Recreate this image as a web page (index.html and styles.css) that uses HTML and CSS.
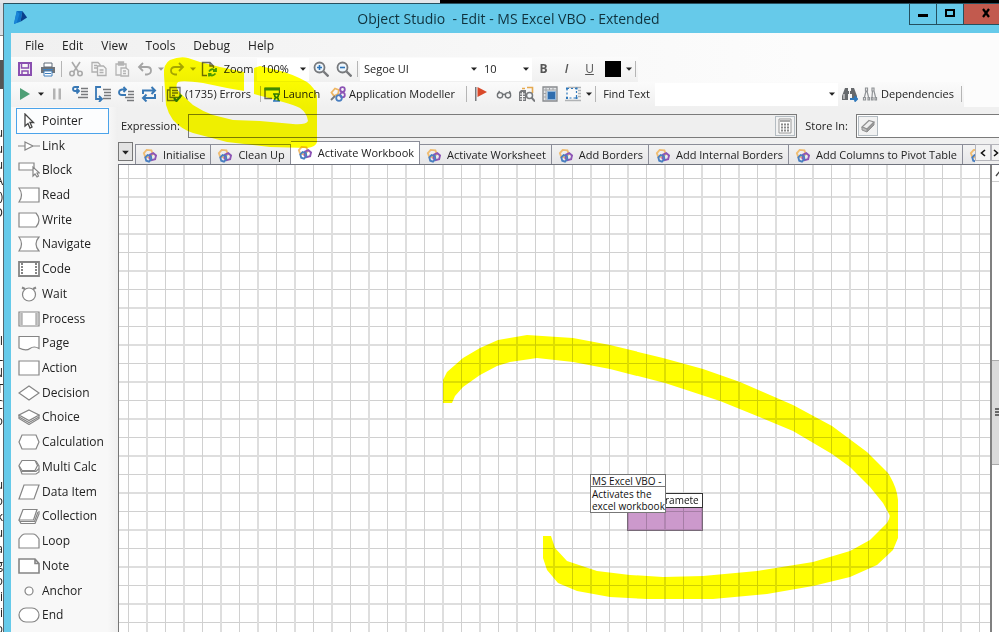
FILE: index.html
```html
<!DOCTYPE html>
<html lang="en">
<head>
<meta charset="utf-8">
<title>Object Studio - Edit - MS Excel VBO - Extended</title>
<link rel="stylesheet" href="styles.css">
</head>
<body>
<svg class="defs" aria-hidden="true">
  <defs>
    <symbol id="page" viewBox="0 0 16 16">
      <g fill="none" stroke-width="2">
        <path stroke="#f0bd72" d="M2 5.500 5 2l5 .5 1.500 4L8 10 3.500 9.500z"/>
        <path stroke="#8d55b5" d="M8.500 7 12 5.500l3 2.500-1 4-4 1-2-2z"/>
        <path stroke="#4a7fc0" d="M3.500 10 6 7.500l3.500 1 .5 3.500-2.500 2.500-3-1z"/>
      </g>
    </symbol>
    <symbol id="down" viewBox="0 0 8 6"><path fill="currentColor" d="M1 1.500h6L4 4.800z"/></symbol>
  </defs>
</svg>

<div class="backdrop-top"></div>
<div class="desktop">
  <div class="backdrop-left" aria-hidden="true">
    <div class="behind-head"></div><div class="behind-gap"></div><div class="behind-dark"></div>
<pre class="behind-text">u
u
u
A
(
D







I
L
N
T
C
o



u
o
k
u
a
g
o
i
i
o</pre>
  </div>
  <div class="window">
    <header class="titlebar">
      <svg class="logo" viewBox="0 0 16 16"><path fill="#0d6fc4" d="M4 1h6L8 12.500 1 15z"/><path fill="#0a3f8c" d="M10 1 15 8l-7 4.500z"/><path fill="#1a85d8" d="M4 1 1 15l3-1.500L7 4z"/></svg>
      <h1>Object Studio&nbsp; - Edit - MS Excel VBO - Extended</h1>
      <div class="win-buttons">
        <button class="win" aria-label="Minimise"><svg viewBox="0 0 12 10"><path d="M1 6h10v3H1z"/></svg></button>
        <button class="win" aria-label="Maximise"><svg viewBox="0 0 12 10"><path fill="none" stroke="#000" stroke-width="2" d="M2 2h8v6H2z"/></svg></button>
        <button class="win close" aria-label="Close"><svg viewBox="0 0 12 10"><path fill="none" stroke="#000" stroke-width="2.200" d="M3 1l6 8M9 1 3 9"/></svg></button>
      </div>
    </header>

    <div class="client">
      <nav class="menu">
        <button>File</button><button>Edit</button><button>View</button><button>Tools</button><button>Debug</button><button>Help</button>
      </nav>

      <div class="toolbar">
        <button class="ib" aria-label="Save"><svg viewBox="0 0 16 16"><path fill="none" stroke="#8a4fb0" stroke-width="2" d="M2 2h12v12H2z"/><path fill="none" stroke="#8a4fb0" stroke-width="1.500" d="M4.500 2v5h7V2M5 14v-4h6v4"/></svg></button>
        <button class="ib" aria-label="Print"><svg viewBox="0 0 16 16"><path fill="#707479" d="M1 6h14v6H1z"/><path fill="#fff" stroke="#5f6b78" d="M4 2h8v4H4z"/><path fill="#fff" stroke="#3f7fbd" d="M4 10h8v5H4z"/><path stroke="#3f7fbd" d="M5 12.500h6M3 8.500h10"/></svg></button>
        <i class="sep"></i>
        <button class="ib off" aria-label="Cut"><svg viewBox="0 0 16 16"><g fill="none" stroke="#a9a9a9" stroke-width="1.600"><path d="M4 1l6.500 10M12 1 5.500 11"/><circle cx="4" cy="12.500" r="2.200"/><circle cx="12" cy="12.500" r="2.200"/></g></svg></button>
        <button class="ib off" aria-label="Copy"><svg viewBox="0 0 16 16"><g fill="#f5f5f5" stroke="#b0b0b0" stroke-width="1.300"><path d="M1 1.500h6l2 2V11H1z"/><path d="M6.500 5h6L15 7.500v7H6.500z"/><path d="M3 4.500h3M3 7h3M8.500 9h4M8.500 11.500h4"/></g></svg></button>
        <button class="ib off" aria-label="Paste"><svg viewBox="0 0 16 16"><g fill="#f5f5f5" stroke="#b4b4b4" stroke-width="1.300"><path d="M2 3h10v11H2z"/><path fill="#b4b4b4" d="M4.500 1h5v3h-5z"/><path d="M7 7h5l2.500 2v6H7zM9 10h3M9 12.500h3"/></g></svg></button>
        <button class="ib off" aria-label="Undo"><svg viewBox="0 0 16 16"><path fill="none" stroke="#a5a5a5" stroke-width="1.800" d="M6 2 2 6l4 4M2 6h8q4 0 4 3.500T10 13.500H8"/></svg></button>
        <button class="dd off" aria-label="Undo list"><svg viewBox="0 0 8 6"><use href="#down"/></svg></button>
        <button class="ib off" aria-label="Redo"><svg viewBox="0 0 16 16"><path fill="none" stroke="#a5a5a5" stroke-width="1.800" d="M10 2l4 4-4 4M14 6H6Q2 6 2 9.500T6 13.500h2"/></svg></button>
        <button class="dd off" aria-label="Redo list"><svg viewBox="0 0 8 6"><use href="#down"/></svg></button>
        <button class="ib" aria-label="Refresh page"><svg viewBox="0 0 16 16"><path fill="none" stroke="#6b6b6b" stroke-width="1.400" d="M6 14.500H1.500v-13H9L12.500 5v2M9 1.500V5h3.500"/><g fill="none" stroke="#4b9a47" stroke-width="1.800"><path d="M8 10.500q3-4 6-1M15 7v3h-3M14.500 12.500q-3 3.500-6 1M8 15.500V13h2.500"/></g></svg></button>
        <label class="tlabel zoom-label" for="zoom">Zoom</label>
        <span class="combo combo-s"><select id="zoom"><option>100%</option></select><svg viewBox="0 0 8 6"><use href="#down"/></svg></span>
        <button class="ib" aria-label="Zoom in"><svg viewBox="0 0 16 16"><circle cx="6.500" cy="6.500" r="5" fill="#eef6fc" stroke="#77797c" stroke-width="1.800"/><path stroke="#77797c" stroke-width="2.400" d="M10.500 10.500l5 5"/><path stroke="#2d74b8" stroke-width="1.600" d="M4 6.500h5M6.500 4v5"/></svg></button>
        <button class="ib" aria-label="Zoom out"><svg viewBox="0 0 16 16"><circle cx="6.500" cy="6.500" r="5" fill="#eef6fc" stroke="#77797c" stroke-width="1.800"/><path stroke="#77797c" stroke-width="2.400" d="M10.500 10.500l5 5"/><path stroke="#2d74b8" stroke-width="1.600" d="M4 6.500h5"/></svg></button>
        <i class="sep"></i>
        <span class="combo combo-l"><select aria-label="Font"><option>Segoe UI</option></select><svg viewBox="0 0 8 6"><use href="#down"/></svg></span>
        <span class="combo combo-s"><select aria-label="Font size"><option>10</option></select><svg viewBox="0 0 8 6"><use href="#down"/></svg></span>
        <button class="ib fmt bold">B</button>
        <button class="ib fmt italic">I</button>
        <button class="ib fmt under">U</button>
        <button class="ib" aria-label="Font colour"><span class="swatch"></span></button>
        <button class="dd" aria-label="Colour list"><svg viewBox="0 0 8 6"><use href="#down"/></svg></button>
        <i class="sep"></i>
      </div>

      <div class="toolbar">
        <button class="ib" aria-label="Go"><svg viewBox="0 0 16 16"><path fill="#4f9f76" d="M3 2l10 6-10 6z"/></svg></button>
        <button class="dd" aria-label="Go options"><svg viewBox="0 0 8 6"><use href="#down"/></svg></button>
        <button class="ib" aria-label="Pause"><svg viewBox="0 0 16 16"><path fill="#b3b3b3" d="M4 2.500h2.500v11H4zM9.500 2.500H12v11H9.500z"/></svg></button>
        <button class="ib" aria-label="Step in"><svg viewBox="0 0 16 16"><path fill="none" stroke="#3878b5" stroke-width="1.800" d="M7 1H3Q1 1 1 3t2 2h3M4.500 2.500 7 5 4.500 7.500"/><path stroke="#77797c" stroke-width="1.400" d="M9 2.500h7M9 5.500h7M9 8.500h7M6 11.500h10"/></svg></button>
        <button class="ib" aria-label="Step over"><svg viewBox="0 0 16 16"><path fill="none" stroke="#3878b5" stroke-width="1.800" d="M6 1H1v12h5M4 10l3 3-3 3"/><path stroke="#77797c" stroke-width="1.400" d="M8 3.500h8M9 6.500h7M9 9.500h7M8 12.500h8"/></svg></button>
        <button class="ib" aria-label="Step out"><svg viewBox="0 0 16 16"><path fill="none" stroke="#3878b5" stroke-width="1.800" d="M8 9H4Q1 9 1 6.500T4 3.500h4M5.500 1 8 3.500 5.500 6"/><path stroke="#77797c" stroke-width="1.400" d="M10 5.500h6M10 8.500h6M7 11.500h9M9 14.500h7"/></svg></button>
        <button class="ib" aria-label="Reset"><svg viewBox="0 0 16 16"><path fill="none" stroke="#3878b5" stroke-width="2" d="M2 8V4.500h11M10.500 1l3.500 3.500L10.500 8M14 8v4H3M5.500 8.500 2 12l3.500 3.500"/></svg></button>
        <i class="sep"></i>
        <button class="tb tb-errors"><svg viewBox="0 0 16 16"><path fill="#eef0f2" stroke="#6d7174" stroke-width="1.300" d="M4 1.500h10v10H4z"/><path fill="none" stroke="#6d7174" stroke-width="1.300" d="M4 4H1.500v10.500H10M6 4.500h6M6 7h6M6 9.500h3"/><path fill="none" stroke="#2f78bb" stroke-width="2.200" d="M8 12l2.500 3L15.500 9"/></svg>(1735) Errors</button>
        <i class="sep"></i>
        <button class="tb tb-launch"><svg viewBox="0 0 16 16"><path fill="none" stroke="#666" stroke-width="1.400" d="M8 12.500H1v-10h14.500V7"/><path fill="#3f8b4d" d="M.5 1.500h15.500v3H.5z"/><path fill="none" stroke="#2f78bb" stroke-width="1.600" d="M9 8h7M9 15h7M10.500 8q0 3.500 2 3.500t2-3.500M10.500 15q0-3.500 2-3.500t2 3.500"/></svg>Launch</button>
        <button class="tb tb-model"><svg viewBox="0 0 16 16"><g fill="none" stroke-width="1.800"><path stroke="#efb765" d="M1.500 6.500 5 2.500l4 1.500-1 4-4 2z"/><circle cx="12.500" cy="3.500" r="2.300" stroke="#8d55b5"/><circle cx="12.500" cy="9" r="2.300" stroke="#8d55b5"/><circle cx="9" cy="12" r="2.800" stroke="#4a7fc0"/><path stroke="#77797c" d="M1 14l4-4"/></g></svg>Application Modeller</button>
        <i class="sep"></i>
        <button class="ib" aria-label="Breakpoint"><svg viewBox="0 0 16 16"><path fill="#77797c" d="M2 1h1.500v14H2z"/><path fill="#d9492a" d="M4.500 1 14 6l-9.500 5z"/></svg></button>
        <button class="ib" aria-label="Watch"><svg viewBox="0 0 18 16"><g fill="none" stroke="#707376" stroke-width="1.500"><circle cx="4.500" cy="9.500" r="3"/><circle cx="13.500" cy="9.500" r="3"/><path d="M7.500 9q1.500-1.500 3 0M2 8l2-3.500M16.500 8 15 4.500"/></g></svg></button>
        <button class="ib" aria-label="Find references"><svg viewBox="0 0 16 16"><path fill="#77797c" d="M0 6l2-2h5v11H0z"/><path stroke="#f5f5f5" d="M1 8h5M1 10.500h5M1 13h5M3.500 6v9"/><path fill="none" stroke="#e5a94f" stroke-width="1.600" d="M3 2.500h3M8 1.500h5.500V7"/><circle cx="10.500" cy="9.500" r="3" fill="#f4f8fb" stroke="#77797c" stroke-width="1.500"/><path stroke="#77797c" stroke-width="2" d="M12.500 11.500 16 15.500"/></svg></button>
        <button class="ib" aria-label="Overview"><svg viewBox="0 0 16 16"><path fill="#e4e6e8" stroke="#888b8e" stroke-width="1.300" d="M1 1h14v14H1z"/><path stroke="#a0a3a6" d="M1 4h14M4 1v14M7.500 1v3M11 1v3M1 7.500h3M1 11h3"/><path fill="#2f6dae" stroke="#8fb6dc" d="M5.500 5.500h8v8h-8z"/></svg></button>
        <button class="ib" aria-label="Grid"><svg viewBox="0 0 16 16"><path stroke="#b0b2b4" stroke-width="1.500" d="M3 1.500h13M13 4.500h3M13 7.500h3M13 10.500h3M0 14.500h16"/><path fill="#fafafa" stroke="#2f78bb" stroke-width="1.200" stroke-dasharray="2 2" d="M2 2.500h9.500V12H2z"/><path fill="#2f78bb" d="M1 1.500h2v2H1zM10.500 1.500h2v2h-2zM1 11h2v2H1zM10.500 11h2v2h-2z"/></svg></button>
        <button class="dd" aria-label="Grid options"><svg viewBox="0 0 8 6"><use href="#down"/></svg></button>
        <i class="sep"></i>
        <label class="tlabel find-label" for="find">Find Text</label>
        <span class="combo combo-find"><input id="find" type="text"><svg viewBox="0 0 8 6"><use href="#down"/></svg></span>
        <button class="ib" aria-label="Find next"><svg viewBox="0 0 16 16"><path fill="#66696c" d="M3 2h3v3h3V2h3l3 8v2h-5V8H6v6H0v-4z"/><path stroke="#f4f4f4" d="M2 8v5M7.500 4v4"/><path fill="none" stroke="#2f78bb" stroke-width="2" d="M8 13h7M12.500 10.500 15 13l-2.500 2.500"/></svg></button>
        <button class="tb tb-dep"><svg viewBox="0 0 16 16"><g fill="none" stroke="#909396" stroke-width="1.200"><path d="M3.500 2h2v3h-2zM10 2h2v3h-2zM4 5 2.500 11M5 5l1.500 6M10.500 5l-.5 6M12 5l1.500 6M1.500 11.500h2V14h-2zM6 11.500h1.500V14H6zM9.500 11.500H11V14H9.500zM13 11.500h1.500V14H13z"/></g></svg>Dependencies</button>
        <i class="sep"></i>
      </div>

      <div class="workspace">
        <aside class="palette">
          <button class="selected"><svg viewBox="0 0 22 16"><path fill="#fff" stroke="#444" stroke-width="1.300" d="M7 1v12l3-2.500 2 4.500 2-1-2-4.500h3.500z"/></svg>Pointer</button>
          <button><svg viewBox="0 0 22 16"><path d="M0 8h7M15 8h7M7 4l8 4-8 4z"/></svg>Link</button>
          <button><svg viewBox="0 0 22 16"><path d="M1 1h15v7H1z"/><path d="M15 5v9l2-2 2 3 1.500-1-1.500-3h2.500z"/></svg>Block</button>
          <button><svg viewBox="0 0 22 16"><path d="M1 1h20v14H1Q6 8 1 1z"/></svg>Read</button>
          <button><svg viewBox="0 0 22 16"><path d="M1 1h17q6 7 0 14H1z"/></svg>Write</button>
          <button><svg viewBox="0 0 22 16"><path d="M1 1h20q-6 7 0 14H1Q6 8 1 1z"/></svg>Navigate</button>
          <button><svg viewBox="0 0 22 16"><path stroke-width="1.800" d="M1 1h20v14H1z"/><path d="M4 2v12M18 2v12" stroke-dasharray="2 1" stroke-width="2"/></svg>Code</button>
          <button><svg viewBox="0 0 22 16"><circle cx="11" cy="8.500" r="6.500"/><path stroke-width="2" d="M4 1.500l3 1.500M18 1.500 15 3"/></svg>Wait</button>
          <button><svg viewBox="0 0 22 16"><path d="M1 1h20v14H1z"/><path stroke="#b5b5b5" stroke-width="2.500" d="M3.500 2v12M18.500 2v12"/></svg>Process</button>
          <button><svg viewBox="0 0 22 16"><path d="M1 1.500h20v12q-5-3-9 0t-11-.5z"/></svg>Page</button>
          <button><svg viewBox="0 0 22 16"><path d="M1 1h20v14H1z"/></svg>Action</button>
          <button><svg viewBox="0 0 22 16"><path d="M11 1l10 7-10 7L1 8z"/></svg>Decision</button>
          <button><svg viewBox="0 0 22 16"><path d="M1 6v3.500l10 6 10-6V6"/><path d="M1 8l10 5.500L21 8"/><path d="M11 1l10 5-10 5.500L1 6z"/></svg>Choice</button>
          <button><svg viewBox="0 0 22 16"><path d="M4 1h14l3 7-3 7H4L1 8z"/></svg>Calculation</button>
          <button><svg viewBox="0 0 22 16"><path d="M1 7l3 8h14l3-2V7l-3-5"/><path d="M3 12.500h15l3-3"/><path d="M4 1.500h13l2.500 5-2.500 5H4L1 6.500z"/></svg>Multi Calc</button>
          <button><svg viewBox="0 0 22 16"><path d="M6 1h15l-5 14H1z"/></svg>Data Item</button>
          <button><svg viewBox="0 0 22 16"><path d="M1 12l2 3.500h14L21 6V3"/><path d="M2 13.500h14.500L20 4"/><path d="M5 1.500h14L15.500 12H1z"/></svg>Collection</button>
          <button><svg viewBox="0 0 22 16"><path d="M1 15V6q3-5 6-5h8q3 0 6 5v9z"/></svg>Loop</button>
          <button><svg viewBox="0 0 22 16"><path stroke-width="1.600" d="M1 1h16l4 4.500V15H1zM17 1v4.500h4"/></svg>Note</button>
          <button><svg viewBox="0 0 22 16"><circle cx="11" cy="8" r="4"/></svg>Anchor</button>
          <button><svg viewBox="0 0 22 16"><rect x="1" y="1" width="20" height="14" rx="7"/></svg>End</button>
        </aside>

        <main class="editor">
          <div class="expression">
            <label for="expr">Expression:</label>
            <span class="field expr"><input id="expr" type="text"><button aria-label="Expression editor"><svg viewBox="0 0 16 16"><path fill="#fff" stroke="#999" d="M2 1h12v14H2z"/><path fill="#aaa" d="M3 2h10v2H3z"/><path stroke="#888" stroke-width="2" stroke-dasharray="2 1" d="M4 6.500h9M4 9.500h9M4 12.500h9"/></svg></button></span>
            <label for="store">Store In:</label>
            <span class="field store"><button aria-label="Data item"><svg viewBox="0 0 16 16"><path fill="#eee" stroke="#909090" stroke-width="1.200" d="M9 2.500 14 4 7 11 2 9z"/><path fill="#999" stroke="#909090" d="M14 4v3l-7 7v-3z"/><path fill="#bbb" stroke="#909090" d="M2 9l5 2v3l-5-2z"/></svg></button><input id="store" type="text"></span>
          </div>

          <div class="tabs">
            <button class="tab-list" aria-label="Page list"><svg viewBox="0 0 8 6"><use href="#down"/></svg></button>
            <div class="tab-strip" role="tablist">
              <button role="tab"><svg><use href="#page"/></svg>Initialise</button>
              <button role="tab"><svg><use href="#page"/></svg>Clean Up</button>
              <button role="tab" class="active" aria-selected="true"><svg><use href="#page"/></svg>Activate Workbook</button>
              <button role="tab"><svg><use href="#page"/></svg>Activate Worksheet</button>
              <button role="tab"><svg><use href="#page"/></svg>Add Borders</button>
              <button role="tab"><svg><use href="#page"/></svg>Add Internal Borders</button>
              <button role="tab"><svg><use href="#page"/></svg>Add Columns to Pivot Table</button>
              <button role="tab" aria-label="Next page"><svg><use href="#page"/></svg></button>
            </div>
            <button class="tab-nav" aria-label="Scroll left"><svg viewBox="0 0 8 8"><path d="M6 1 2.500 4 6 7"/></svg></button>
            <button class="tab-nav last" aria-label="Scroll right"><svg viewBox="0 0 8 8"><path d="M2 1l3.500 3L2 7"/></svg></button>
          </div>

          <div class="canvas-row">
            <div class="canvas">
              <div class="node data"><div class="data-head">ramete</div><div class="data-body"></div></div>
              <div class="node info"><div class="info-head">MS Excel VBO -</div><div class="info-body">Activates the<br>excel workbook</div></div>
            </div>
            <div class="scrollbar">
              <button class="up" aria-label="Scroll up"><svg viewBox="0 0 12 8"><path d="M2 7l4-5 4 5"/></svg></button>
              <div class="track-before"></div>
              <div class="thumb"><svg viewBox="0 0 8 8"><path d="M0 1h8M0 4h8M0 7h8"/></svg></div>
              <div class="track-after"></div>
            </div>
          </div>
        </main>
      </div>
    </div>
  </div>
</div>

<svg class="marker" width="999" height="632" aria-hidden="true">
  <path d="M244 72 220 67 200 62 188 58Q180 56 170 60 163 64 164 75L166 105Q168 113 173 120 181 129 193 133L227 142 270 147 307 148Q316 147 317 142V96Q315 88 307 82 293 74 277 70L260 66 254 68V94L283 102Q294 105 300 108 307 113 308 121 306 125 293 124L260 121 233 120 213 115Q202 111 193 105L180 93Q174 86 178 82 183 80 203 83L227 88 244 91z"/>
  <path d="M443 403V380L447 372 463 358 480 348 498 340 527 335 573 338 610 345 663 358 703 369 740 382 793 405 832 426 867 452 888 473Q897 487 898 500V538L893 550 877 565 850 577 813 586 767 594 713 599H647L610 597 577 591 558 583 547 570 543 558V536H551L555 548 567 561 597 571 630 575 663 577 703 576 757 571 813 562 850 551 870 540 887 523Q891 517 889 514L883 503 870 487 850 467 832 454 793 431 757 416 720 401 665 383 610 369 573 362 537 358 510 362 497 366 480 375 463 387 455 396 452 403z"/>
</svg>
</body>
</html>
```

FILE: styles.css
```css
* { box-sizing: border-box; }

html, body { height: 100%; }

body {
  margin: 0;
  position: relative;
  display: flex;
  flex-direction: column;
  overflow: hidden;
  background: #fff;
  color: #222;
  font: 12px/16px "Open Sans", "Noto Sans", sans-serif;
}

button, input, select {
  margin: 0;
  padding: 0;
  border: 0;
  border-radius: 0;
  background: none;
  color: inherit;
  font: inherit;
}

h1, pre { margin: 0; }
svg { flex: none; }
.defs { position: absolute; width: 0; height: 0; }

/* What shows behind the window */
.backdrop-top {
  flex: none;
  height: 3px;
  background: linear-gradient(90deg, #e4e6ea 44%, #000 44%);
}
.desktop { flex: 1; min-height: 0; display: flex; }
.backdrop-left {
  width: 4px;
  overflow: hidden;
  border-right: 1px solid #54666e;
  background: #fff;
}
.behind-head { height: 33px; background: #d9dfe6; border-bottom: 1px solid #888; }
.behind-gap { height: 24px; }
.behind-dark { height: 29px; background: #555; margin-bottom: 36px; }
.behind-text {
  font: 12px/16px "Open Sans", sans-serif;
  direction: rtl;
  width: 3px;
}

/* Window frame */
.window {
  flex: 1;
  min-width: 0;
  display: flex;
  flex-direction: column;
  padding-left: 7px;
  background: #66caea;
  border-top: 1px solid #28505f;
}
.titlebar {
  flex: none;
  height: 29px;
  display: flex;
  align-items: flex-start;
}
.logo { width: 15px; height: 15px; margin: 6px 0 0 2px; }
.titlebar h1 {
  flex: 1;
  padding-left: 80px;
  text-align: center;
  font-size: 14px;
  line-height: 29px;
  font-weight: 400;
  color: #10323d;
}
.win-buttons { display: flex; }
.win {
  width: 27px;
  height: 21px;
  border: 1px solid #24505f;
  border-top: 0;
  border-right: 0;
}
.win svg { width: 12px; height: 10px; }
.win.close { width: 36px; background: #c25a4e; padding-left: 8px; }

.client {
  flex: 1;
  min-height: 0;
  display: flex;
  flex-direction: column;
  background: linear-gradient(90deg, #f0f0f0, #fcfcfc 80%);
}

/* Menu and toolbars */
.menu {
  flex: none;
  height: 24px;
  display: flex;
  align-items: center;
  gap: 18px;
  padding: 1px 0 0 14px;
}
.toolbar {
  flex: none;
  height: 25px;
  display: flex;
  align-items: center;
  align-self: flex-start;
  padding: 0 0 1px 2px;
  background: linear-gradient(#fbfbfb, #f0f0f0);
  font-size: 11px;
}
.toolbar button { display: flex; align-items: center; justify-content: center; }
.ib { width: 23px; height: 22px; }
.ib svg { width: 16px; height: 16px; }
.dd { width: 9px; height: 22px; }
.dd svg { width: 8px; height: 6px; }
.off { color: #999; }
.sep { flex: none; width: 1px; height: 16px; margin: 0 2px; background: #b5b5b5; }
.tlabel { text-align: center; }
.zoom-label { width: 37px; }
.find-label { width: 57px; }
.toolbar .tb { height: 22px; justify-content: flex-start; gap: 3px; padding-left: 1px; white-space: nowrap; }
.tb svg { width: 16px; height: 16px; }
.tb-errors { width: 93px; }
.tb-launch { width: 66px; }
.tb-model { width: 135px; }
.tb-dep { width: 98px; }
.fmt { color: #555; }
.toolbar .fmt { font-size: 12px; }
.bold { font-weight: 700; }
.italic { font-style: italic; font-weight: 600; }
.under { text-decoration: underline; }
.swatch { width: 16px; height: 16px; background: #000; }

.combo {
  display: flex;
  align-items: center;
  height: 23px;
  padding: 0 2px 0 4px;
  background: #fff;
}
.combo select, .combo input { flex: 1; min-width: 0; appearance: none; outline: 0; }
.combo svg { width: 8px; height: 6px; }
.combo-s { width: 52px; }
.combo-l { width: 120px; }
.combo-find { width: 183px; }

/* Shape palette */
.workspace { flex: 1; min-height: 0; display: flex; background: #f0f0f0; }
.palette {
  flex: none;
  width: 107px;
  display: flex;
  flex-direction: column;
  padding: 1px 9px 4px 5px;
  background: linear-gradient(90deg, #f8f8f8 90%, #efefef);
}
.palette button {
  flex: 1;
  min-height: 0;
  display: flex;
  align-items: center;
  gap: 2px;
  padding: 0 0 1px 2px;
  text-align: left;
  line-height: 16px;
  white-space: nowrap;
}
.palette .selected { padding: 0 0 0 1px; border: 1px solid #4ba3ea; background: #fcfdfe; }
.palette svg {
  width: 22px;
  height: 16px;
  fill: #fff;
  stroke: #858585;
  stroke-width: 1.2;
}

/* Editor */
.editor { flex: 1; min-width: 0; display: flex; flex-direction: column; }
.expression {
  flex: none;
  height: 34px;
  display: flex;
  align-items: center;
  gap: 8px;
  padding: 5px 0 1px 3px;
  overflow: hidden;
  font-size: 11px;
}
.expression label { white-space: nowrap; }
.field { height: 24px; display: flex; border: 1px solid #7b7b7b; padding: 1px; }
.field input { flex: 1; min-width: 0; outline: 0; }
.field button { width: 20px; border: 1px solid #b4bcc2; display: flex; align-items: center; justify-content: center; background: #f2f2f2; }
.field svg { width: 16px; height: 16px; }
.expr { flex: 1; background: #efefef; }
.store { width: 143px; border-right: 0; background: #fff; }

.tabs {
  flex: none;
  height: 24px;
  display: flex;
  align-items: flex-end;
  border-bottom: 1px solid #70737d;
  font-size: 11px;
}
.tab-list { width: 15px; height: 19px; margin: 0 2px 3px 0; border: 1px solid #777; background: #e3e3e3; }
.tab-list svg { width: 9px; height: 7px; }
.tab-strip { flex: 1; min-width: 0; height: 23px; overflow: hidden; display: flex; align-items: flex-end; }
.tab-strip button {
  flex: none;
  height: 20px;
  display: flex;
  align-items: center;
  gap: 6px;
  padding: 1px 5px 0 6px;
  border: 1px solid #8b8d98;
  border-width: 1px 1px 0 0;
  background: linear-gradient(#f3f3f3, #e6e6e8);
  white-space: nowrap;
}
.tab-strip button:first-child { border-left-width: 1px; }
.tab-strip svg { width: 15px; height: 15px; }
.tab-strip .active { height: 23px; background: #fff; padding-bottom: 2px; }
.tab-nav { width: 16px; height: 17px; margin-bottom: 3px; border: 1px solid #b5b5bb; background: #f3f3f3; }
.tab-nav.last { width: 8px; border-right: 0; overflow: hidden; }
.tab-nav svg { width: 8px; height: 8px; fill: none; stroke: #111; stroke-width: 1.6; }

.canvas-row { flex: 1; min-height: 0; display: flex; border-left: 1px solid #777; }
.canvas {
  flex: 1;
  position: relative;
  overflow: hidden;
  background-color: #fff;
  background-image:
    linear-gradient(90deg, #d0d0d0 1px, transparent 1px, transparent 18px, #dedede 18px, #dedede 20px, transparent 20px),
    linear-gradient(#d0d0d0 1px, transparent 1px, transparent 18px, #dedede 18px, #dedede 20px, transparent 20px);
  background-size: 37px 37px;
  background-position: 9px 13px;
}
.node { position: absolute; width: 76px; font-size: 10px; line-height: 12px; white-space: nowrap; }
.info { left: 471px; top: 309px; border: 1px solid #777; background: #fff; color: #111; }
.info-head { height: 12px; padding-left: 1px; line-height: 12px; border-bottom: 1px solid #777; }
.info-body { padding: 1px 0 0 1px; }
.data { left: 508px; top: 328px; }
.data-head { height: 15px; padding-left: 37px; line-height: 13px; border: 1px solid #333; background: #fff; color: #111; }
.data-body { height: 23px; border: 1px solid #8a7a8a; border-top: 0; background: #cc99cc; mix-blend-mode: multiply; }

.scrollbar { flex: none; width: 9px; display: flex; flex-direction: column; border-left: 2px solid #808080; background: #fff; overflow: hidden; }
.scrollbar .up { flex: none; width: 14px; height: 17px; border-bottom: 1px solid #ccc; }
.up svg { width: 12px; height: 8px; margin-left: 2px; fill: none; stroke: #444; stroke-width: 1.4; }
.track-before { flex: 179; }
.thumb { flex: 103; display: flex; align-items: center; padding-left: 3px; border: 1px solid #aaa; border-width: 1px 0; background: #dadada; }
.thumb svg { width: 8px; height: 8px; stroke: #444; stroke-width: 1.4; }
.track-after { flex: 168; }

/* Highlighter strokes drawn over the window */
.marker { position: absolute; left: 0; top: 0; fill: #ff0; mix-blend-mode: multiply; pointer-events: none; }
```
